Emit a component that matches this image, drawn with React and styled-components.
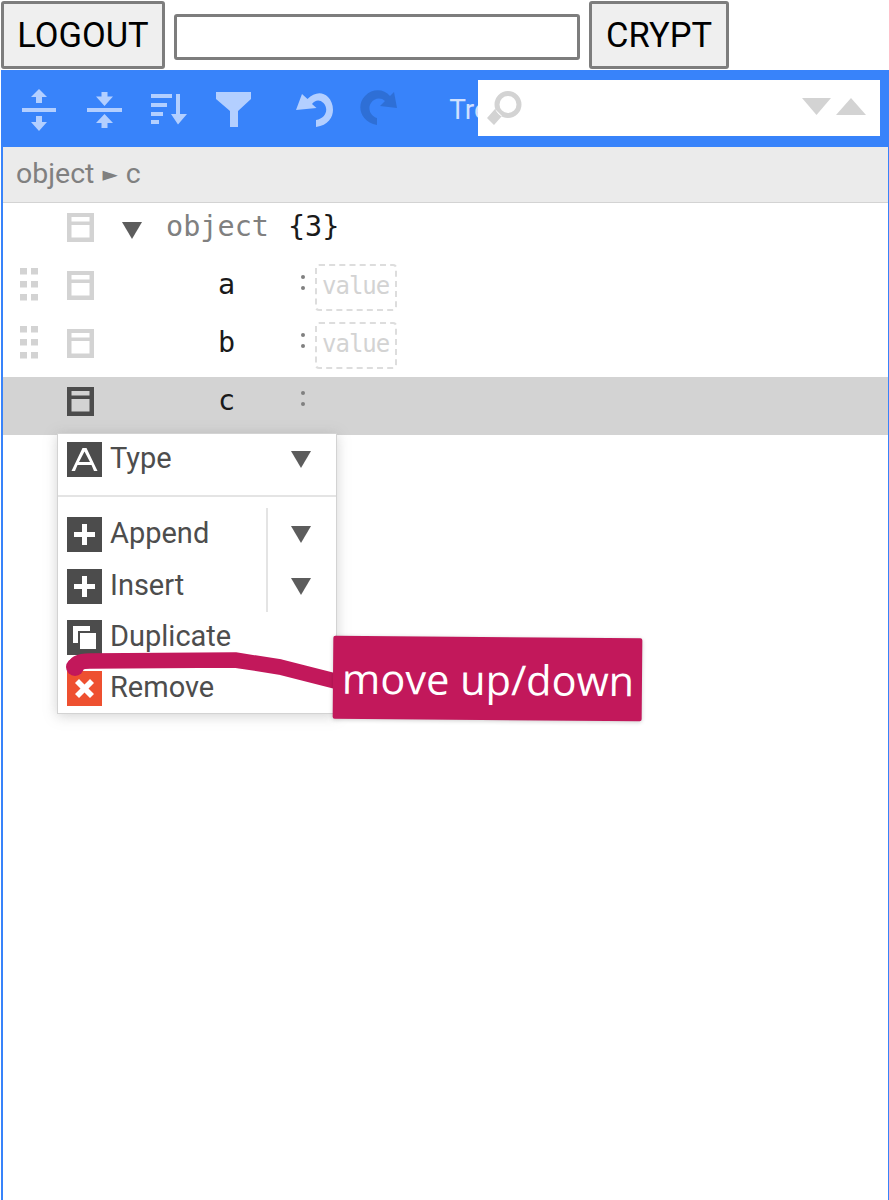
import React from 'react';
import styled, { createGlobalStyle } from 'styled-components';

const Global = createGlobalStyle`
  html, body { margin: 0; padding: 0; background: #fff; }
  body { font-family: Roboto, "Liberation Sans", sans-serif; }
  * { box-sizing: border-box; }
`;

const Page = styled.div`
  position: relative;
  width: 889px;
  height: 1200px;
  overflow: hidden;
  display: flex;
  flex-direction: column;
`;

const TopBar = styled.div`
  display: flex;
  align-items: center;
  height: 70px;
  padding: 0 0 1px 1px;
  gap: 9px;
`;

const PlainButton = styled.button`
  height: 68px;
  width: ${p => p.$w}px;
  padding: 0;
  background: #efefef;
  border: 3px solid #7d7d7d;
  border-radius: 3px;
  color: #000;
  font: 400 34.5px Roboto, sans-serif;
`;

const KeyInput = styled.input`
  width: 406px;
  height: 46px;
  margin-top: 5px;
  background: #fff;
  border: 3px solid #7d7d7d;
  border-radius: 3px;
`;

const Editor = styled.div`
  position: relative;
  flex: 1;
  margin-left: 1px;
  border: 2px solid #3883fa;
  border-bottom: 0;
  border-right-width: 1px;
  display: flex;
  flex-direction: column;
`;

const Menubar = styled.div`
  position: relative;
  height: 75px;
  background: #3883fa;
  display: flex;
  align-items: center;
  padding-left: 4px;
`;

const ToolButton = styled.div`
  width: 64.7px;
  margin-left: ${p => p.$gap || 0}px;
  display: flex;
  justify-content: center;
  align-items: center;
  color: ${p => (p.$off ? '#2e6fd6' : '#b3cfff')};
  svg { display: block; fill: currentColor; }
`;

const ModeLabel = styled.div`
  margin-left: 38px;
  color: #cfe0ff;
  font-size: 28px;
`;

const SearchBox = styled.div`
  position: absolute;
  left: 475px;
  top: 8px;
  width: 402px;
  height: 56px;
  background: #fff;
  display: flex;
  align-items: center;
  padding: 0 14px 0 9px;
  svg { display: block; fill: #d3d3d3; }
`;

const SearchSpacer = styled.div`
  flex: 1;
`;

const SearchArrow = styled.svg`
  margin-left: 5px;
  margin-top: -4px;
`;

const Navbar = styled.div`
  height: 56px;
  background: #ebebeb;
  border-bottom: 1px solid #d3d3d3;
  color: #808080;
  font-size: 28.5px;
  display: flex;
  align-items: center;
  padding: 0 0 2px 13px;
`;

const NavSep = styled.span`
  font-size: 20px;
  margin: 0 8px;
  font-family: "DejaVu Sans", sans-serif;
`;

const Tree = styled.div`
  flex: 1;
  display: flex;
  flex-direction: column;
`;

const Row = styled.div`
  height: 58px;
  display: flex;
  align-items: flex-start;
  padding-left: 16px;
  background: ${p => (p.$selected ? '#d3d3d3' : 'transparent')};
`;

const DragSlot = styled.div`
  width: 48px;
  height: 58px;
  padding: 7px 0 0 1px;
  svg { display: block; fill: #d3d3d3; }
`;

const ContextIcon = styled.svg`
  display: block;
  margin-top: 10px;
  color: ${p => (p.$dark ? '#4c4c4c' : '#d3d3d3')};
`;

const ExpandSlot = styled.div`
  width: 72px;
  height: 58px;
  padding: 19px 0 0 28px;
  svg { display: block; fill: #5c5c5c; }
`;

const Mono = styled.div`
  font: 400 28.5px/48px "DejaVu Sans Mono", monospace;
  color: ${p => p.$c || '#1a1a1a'};
  white-space: pre;
`;

const CountText = styled(Mono)`
  margin-left: 19px;
`;

const KeyCell = styled(Mono)`
  width: 203px;
  padding-left: 124px;
`;

const Colon = styled.div`
  width: 12px;
  padding-top: 14px;
  display: flex;
  flex-direction: column;
  align-items: center;
  gap: 7px;
  i { display: block; width: 4px; height: 4px; border-radius: 50%; background: #808080; }
`;

const ValueBox = styled.div`
  margin: 3px 0 0 6px;
  width: 82px;
  height: 47px;
  border: 2px dashed #dddddd;
  border-radius: 4px;
  color: #d3d3d3;
  font: 400 24px/41px "DejaVu Sans Mono", monospace;
  letter-spacing: -1px;
  padding-left: 5px;
`;

const Menu = styled.div`
  position: absolute;
  left: 54px;
  top: 361px;
  width: 280px;
  height: 281px;
  background: #fff;
  border: 1px solid #d3d3d3;
  box-shadow: 0 2px 12px rgba(128, 128, 128, 0.35);
  color: #4d4d4d;
  font-size: 29px;
`;

const MenuSection = styled.div`
  border-bottom: ${p => (p.$rule ? '2px solid #e4e4e4' : '0')};
  padding-top: ${p => p.$top}px;
  height: ${p => p.$h}px;
`;

const MenuItem = styled.div`
  display: flex;
  align-items: center;
  height: ${p => p.$h || 52}px;
  padding-left: 9px;
`;

const MenuIcon = styled.svg`
  display: block;
  flex: none;
  margin-right: 8px;
`;

const MenuLabel = styled.span`
  flex: 1;
  margin-top: -3px;
`;

const SubArrow = styled.div`
  width: 70px;
  height: 52px;
  padding-left: 23px;
  display: flex;
  align-items: center;
  border-left: ${p => (p.$split ? '2px solid #e4e4e4' : '2px solid transparent')};
  svg { display: block; fill: #5c5c5c; }
`;

const Callout = styled.div`
  position: absolute;
  left: 333px;
  top: 637px;
  width: 309px;
  height: 83px;
  transform: rotate(0.5deg);
  background: #c2185b;
  border-radius: 2px;
  box-shadow: 0 1px 4px rgba(0, 0, 0, 0.2);
  color: #fff;
  font: 400 41.5px/84px "Open Sans", sans-serif;
  padding-left: 9px;
  white-space: nowrap;
`;

const Scribble = styled.svg`
  position: absolute;
  left: 60px;
  top: 645px;
  pointer-events: none;
`;

const Tri = ({ up }) => (
  <svg width="20" height="17" viewBox="0 0 20 17">
    <path d={up ? 'M10 0 20 17H0Z' : 'M0 0H20L10 17Z'} />
  </svg>
);

const Grip = () => (
  <svg width="18" height="33" viewBox="0 0 18 33">
    {[0, 13, 26].map(y => [0, 11].map(x => <rect key={`${x}-${y}`} x={x} y={y} width="7" height="6.5" />))}
  </svg>
);

const CtxIcon = ({ dark }) => (
  <ContextIcon $dark={dark} width="27" height="29" viewBox="0 0 27 29">
    <path fill="currentColor" fillRule="evenodd" d="M0 0H27V29H0ZM4.5 4V8.5H22.5V4ZM4.5 12V24.5H22.5V12Z" />
  </ContextIcon>
);

const BoxIcon = ({ bg = '#4c4c4c', children }) => (
  <MenuIcon width="35" height="35" viewBox="0 0 35 35">
    <rect width="35" height="35" fill={bg} />
    {children}
  </MenuIcon>
);

const Plus = () => <path fill="#fff" d="M15 7H20V15H28V20H20V28H15V20H7V15H15Z" />;

const App = () => (
  <Page>
    <Global />
    <TopBar>
      <PlainButton $w={164}>LOGOUT</PlainButton>
      <KeyInput />
      <PlainButton $w={140}>CRYPT</PlainButton>
    </TopBar>
    <Editor>
      <Menubar>
        <ToolButton>
          <svg width="34" height="42" viewBox="22 87 34 42">
            <path d="M39 87 47 95H42V101H36V95H31ZM22 106H56V110H22ZM36 114H42V120H47L39 129 31 120H36Z" />
          </svg>
        </ToolButton>
        <ToolButton>
          <svg width="35" height="36" viewBox="86 90 35 36">
            <path d="M100.500 90H106.500V94.500H112L103.500 104 95 94.500H100.500ZM86 106H121V110H86ZM103.500 112 112 121H106.500V126H100.500V121H95Z" />
          </svg>
        </ToolButton>
        <ToolButton>
          <svg width="36" height="31" viewBox="152 93 36 31">
            <path d="M152 93H173V97H152ZM152 102H168V106H152ZM152 111H164V115H152ZM152 119H160V123H152ZM177 93H181V113H188L179 123.500 172 113H177Z" />
          </svg>
        </ToolButton>
        <ToolButton>
          <svg width="35" height="35" viewBox="216 91 35 35">
            <path d="M216 91H251V98L238 110V126H230V110L216 98Z" />
          </svg>
        </ToolButton>
        <ToolButton $gap={16}>
          <svg width="37" height="35" viewBox="296 91 37 35">
            <path d="M296 109 302 93 307.500 98C314 91.500 322 90 328 96 336 104 336 123 316 126V119C326 117 329 108 323.500 102 319.500 98 315 99 312 103L316.500 107Z" />
          </svg>
        </ToolButton>
        <ToolButton $off>
          <svg width="37" height="36" viewBox="362 88 37 36" style={{ marginTop: '-4px' }}>
            <path d="M399 106 382 104 387 99C383 95 376 96 373 101 369 107 373 114 379 116V123C362 120 358 103 367 94 375 86 386 87 392 94L396 90Z" />
          </svg>
        </ToolButton>
        <ModeLabel>Tree</ModeLabel>
        <SearchBox>
          <svg width="35" height="34" viewBox="0 0 35 34">
            <path fillRule="evenodd" d="M21 0A13.500 13.500 0 1 1 21 27 13.500 13.500 0 0 1 21 0ZM21 5A8.500 8.500 0 1 0 21 22 8.500 8.500 0 0 0 21 5ZM8 18 15 25 7 34 0 27Z" />
          </svg>
          <SearchSpacer />
          <SearchArrow width="29" height="17" viewBox="0 0 29 17"><path d="M0 0H29L14.500 17Z" /></SearchArrow>
          <SearchArrow width="30" height="17" viewBox="0 0 30 17"><path d="M15 0 30 17H0Z" /></SearchArrow>
        </SearchBox>
      </Menubar>
      <Navbar>
        object<NavSep>►</NavSep>c
      </Navbar>
      <Tree>
        <Row>
          <DragSlot />
          <CtxIcon />
          <ExpandSlot><Tri /></ExpandSlot>
          <Mono $c="#808080">object</Mono>
          <CountText>{'{3}'}</CountText>
        </Row>
        <Row>
          <DragSlot><Grip /></DragSlot>
          <CtxIcon />
          <KeyCell>a</KeyCell>
          <Colon><i /><i /></Colon>
          <ValueBox>value</ValueBox>
        </Row>
        <Row>
          <DragSlot><Grip /></DragSlot>
          <CtxIcon />
          <KeyCell>b</KeyCell>
          <Colon><i /><i /></Colon>
          <ValueBox>value</ValueBox>
        </Row>
        <Row $selected>
          <DragSlot />
          <CtxIcon dark />
          <KeyCell>c</KeyCell>
          <Colon><i /><i /></Colon>
        </Row>
      </Tree>
      <Menu>
        <MenuSection $rule $top={8} $h={63}>
          <MenuItem $h={35}>
            <BoxIcon>
              <path fill="#fff" fillRule="evenodd" d="M15.500 6H19.500L30.500 29H27L24.500 23H10.500L8 29H4.500ZM17.500 9.500 12 20H23Z" />
            </BoxIcon>
            <MenuLabel>Type</MenuLabel>
            <SubArrow><Tri /></SubArrow>
          </MenuItem>
        </MenuSection>
        <MenuSection $top={11} $h={216}>
          <MenuItem>
            <BoxIcon><Plus /></BoxIcon>
            <MenuLabel>Append</MenuLabel>
            <SubArrow $split><Tri /></SubArrow>
          </MenuItem>
          <MenuItem>
            <BoxIcon><Plus /></BoxIcon>
            <MenuLabel>Insert</MenuLabel>
            <SubArrow $split><Tri /></SubArrow>
          </MenuItem>
          <MenuItem $h={51}>
            <BoxIcon>
              <path fill="#fff" fillRule="evenodd" d="M6 6H23V11H11V23H6ZM13 13H29V29H13Z" />
            </BoxIcon>
            <MenuLabel>Duplicate</MenuLabel>
          </MenuItem>
          <MenuItem $h={50}>
            <BoxIcon bg="#ee5030">
              <path fill="#fff" d="M12 8 17.500 13.500 23 8 27 12 21.500 17.500 27 23 23 27 17.500 21.500 12 27 8 23 13.500 17.500 8 12Z" />
            </BoxIcon>
            <MenuLabel>Remove</MenuLabel>
          </MenuItem>
        </MenuSection>
      </Menu>
    </Editor>
    <Scribble width="280" height="45" viewBox="60 645 280 45">
      <circle cx="75" cy="667" r="9" fill="#c2185b" />
      <path fill="none" stroke="#c2185b" strokeWidth="15.5" strokeLinecap="round" strokeLinejoin="round" d="M75 667Q76 661 90 661L235 660 280 667 335 681" />
    </Scribble>
    <Callout>move up/down</Callout>
  </Page>
);

export default App;
